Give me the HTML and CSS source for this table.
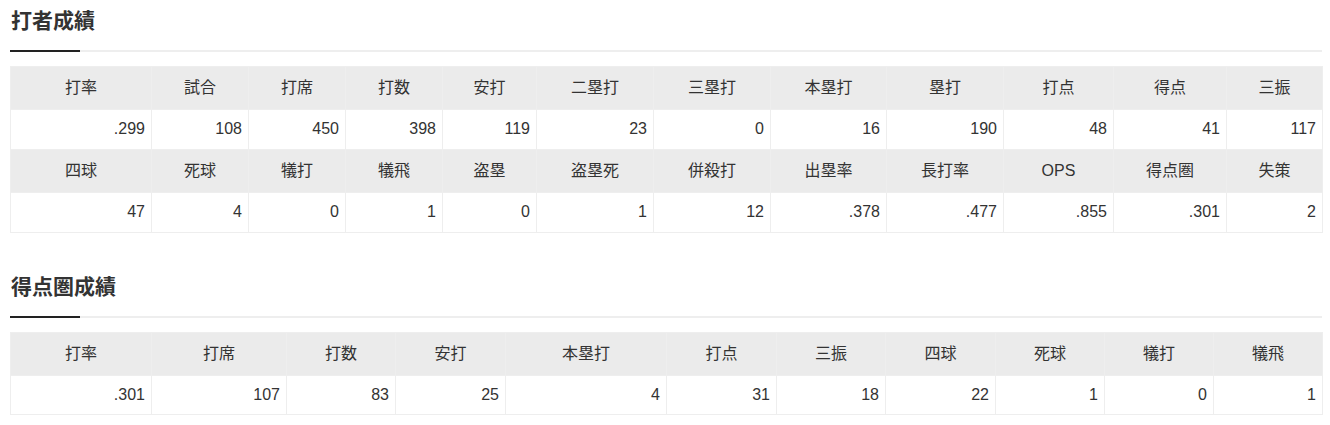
FILE: index.html
```html
<!DOCTYPE html>
<html lang="ja">
<head>
<meta charset="utf-8">
<title>打者成績</title>
<link rel="stylesheet" href="styles.css">
</head>
<body>
<div class="page">
  <section class="block">
    <h2 class="heading">打者成績</h2>
    <table class="stats stats-a">
      <colgroup>
        <col class="a1"><col class="a2"><col class="a3"><col class="a4"><col class="a5"><col class="a6"><col class="a7"><col class="a8"><col class="a9"><col class="a10"><col class="a11"><col class="a12">
      </colgroup>
      <tbody>
        <tr><th>打率</th><th>試合</th><th>打席</th><th>打数</th><th>安打</th><th>二塁打</th><th>三塁打</th><th>本塁打</th><th>塁打</th><th>打点</th><th>得点</th><th>三振</th></tr>
        <tr><td>.299</td><td>108</td><td>450</td><td>398</td><td>119</td><td>23</td><td>0</td><td>16</td><td>190</td><td>48</td><td>41</td><td>117</td></tr>
        <tr><th>四球</th><th>死球</th><th>犠打</th><th>犠飛</th><th>盗塁</th><th>盗塁死</th><th>併殺打</th><th>出塁率</th><th>長打率</th><th>OPS</th><th>得点圏</th><th>失策</th></tr>
        <tr><td>47</td><td>4</td><td>0</td><td>1</td><td>0</td><td>1</td><td>12</td><td>.378</td><td>.477</td><td>.855</td><td>.301</td><td>2</td></tr>
      </tbody>
    </table>
  </section>
  <section class="block block-second">
    <h2 class="heading">得点圏成績</h2>
    <table class="stats stats-b">
      <colgroup>
        <col class="b1"><col class="b2"><col class="b3"><col class="b4"><col class="b5"><col class="b6"><col class="b7"><col class="b8"><col class="b9"><col class="b10"><col class="b11">
      </colgroup>
      <tbody>
        <tr><th>打率</th><th>打席</th><th>打数</th><th>安打</th><th>本塁打</th><th>打点</th><th>三振</th><th>四球</th><th>死球</th><th>犠打</th><th>犠飛</th></tr>
        <tr><td>.301</td><td>107</td><td>83</td><td>25</td><td>4</td><td>31</td><td>18</td><td>22</td><td>1</td><td>0</td><td>1</td></tr>
      </tbody>
    </table>
  </section>
</div>
</body>
</html>
```

FILE: styles.css
```css
html, body {
  margin: 0;
  padding: 0;
  background: #ffffff;
}

body {
  font-family: "Liberation Sans", "Noto Sans CJK JP", sans-serif;
  color: #333333;
  font-size: 16px;
}

.page {
  padding: 0 8px 0 10px;
}

.block-second {
  margin-top: 33px;
}

.heading {
  position: relative;
  margin: 0;
  padding: 6px 0 14px 1px;
  font-size: 21px;
  line-height: 30px;
  font-weight: bold;
  color: #333333;
  border-bottom: 2px solid #eeeeee;
}

.heading::after {
  content: "";
  position: absolute;
  left: 0;
  bottom: -2px;
  width: 70px;
  height: 2px;
  background: #222222;
}

.stats {
  width: 100%;
  margin-top: 14px;
  border-collapse: collapse;
  table-layout: fixed;
  border: 1px solid #dddddd;
}

.stats th,
.stats td {
  border: 1px solid #eeeeee;
  line-height: 24px;
  font-size: 16px;
}

.stats th {
  background: #ebebeb;
  font-weight: normal;
  text-align: center;
  padding: 9px 4px;
  color: #333333;
}

.stats td {
  background: #ffffff;
  text-align: right;
  padding: 7px 6px 8px 4px;
  color: #333333;
}

.stats-b td {
  padding: 7px 6px 7px 4px;
}

.a1 { width: 141px; }
.a2 { width: 97px; }
.a3 { width: 97px; }
.a4 { width: 97px; }
.a5 { width: 94px; }
.a6 { width: 117px; }
.a7 { width: 117px; }
.a8 { width: 116px; }
.a9 { width: 117px; }
.a10 { width: 110px; }
.a11 { width: 113px; }
.a12 { width: 96px; }

.b1 { width: 141px; }
.b2 { width: 135px; }
.b3 { width: 109px; }
.b4 { width: 110px; }
.b5 { width: 161px; }
.b6 { width: 110px; }
.b7 { width: 109px; }
.b8 { width: 110px; }
.b9 { width: 109px; }
.b10 { width: 109px; }
.b11 { width: 109px; }
```
